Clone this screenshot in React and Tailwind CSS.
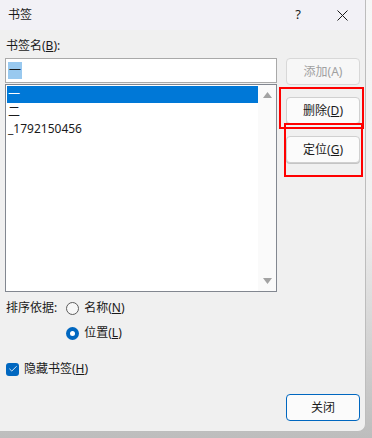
import { Check } from 'lucide-react';

const FONT = "font-['Noto_Sans','Noto_Sans_CJK_SC',sans-serif]";

function Btn({ children, disabled, primary, className = '' }) {
  return (
    <button
      className={`w-[74px] h-[27px] rounded-[4px] border text-[12px] leading-none flex items-center justify-center ${
        primary
          ? 'border-[#0067c0] bg-[#fbfbfb] text-[#1a1a1a]'
          : disabled
          ? 'border-[#d8d8d8] bg-[#f7f7f7] text-[#a0a0a0]'
          : 'border-[#d0d0d0] bg-[#fbfbfb] text-[#1a1a1a] shadow-[0_1px_0_#c4c4c4]'
      } ${className}`}
    >
      {children}
    </button>
  );
}

function Radio({ checked }) {
  return checked ? (
    <span className="w-[13px] h-[13px] rounded-full bg-[#0067c0] flex items-center justify-center">
      <span className="w-[5px] h-[5px] rounded-full bg-white" />
    </span>
  ) : (
    <span className="w-[13px] h-[13px] rounded-full border border-[#5c5c5c] bg-[#f7f7f7]" />
  );
}

export default function App() {
  const rows = ['一', '二', '_1792150456'];
  return (
    <div className={`${FONT} w-[372px] h-[438px] bg-[#b9b9b9] relative overflow-hidden`}>
      <div className="absolute inset-0 bg-gradient-to-b from-[#f6f6f6] via-[#f0f0f0] to-[#bdbdbd]" />
      <div className="relative w-[366px] h-[432px] bg-[#f0f0f0] border-r border-b border-[#bdbdbd] rounded-br-[8px] flex flex-col text-[#1a1a1a] text-[12px]">
        {/* Title bar */}
        <div className="h-[30px] bg-[#f2f1f6] flex items-center pl-[8px] shrink-0">
          <span className="text-[12px]">书签</span>
          <span className="ml-auto w-[16px] text-center text-[13px] mr-[31px]">?</span>
          <svg width="11" height="11" viewBox="0 0 11 11" className="mr-[17px]">
            <path d="M0.5 0.5 L10.5 10.5 M10.5 0.5 L0.5 10.5" stroke="#1a1a1a" strokeWidth="1" />
          </svg>
        </div>

        {/* Body */}
        <div className="flex flex-1 pl-[5px]">
          <div className="w-[272px] flex flex-col">
            <div className="mt-[8px] h-[16px] leading-[16px] pl-[1px]">
              书签名(<u>B</u>):
            </div>
            <div className="mt-[4px] h-[25px] border border-[#a9a9a9] bg-white flex items-center px-[2px]">
              <span className="bg-[#99c9ef] px-[1px] leading-[17px]">一</span>
            </div>
            <div className="mt-[1px] h-[208px] border border-[#828790] bg-white flex">
              <div className="flex-1 pt-[1px] pl-[1px]">
                {rows.map((r, i) => (
                  <div
                    key={r}
                    className={`h-[17px] leading-[17px] pl-[1px] ${i === 0 ? 'bg-[#0078d7] text-white' : ''}`}
                  >
                    {r}
                  </div>
                ))}
              </div>
              <div className="w-[18px] bg-[#fafafa] flex flex-col items-center justify-between py-[7px]">
                <svg width="9" height="6" viewBox="0 0 9 6"><path d="M4.5 0 L9 6 L0 6 Z" fill="#a3a3a3" /></svg>
                <svg width="9" height="6" viewBox="0 0 9 6"><path d="M0 0 L9 0 L4.5 6 Z" fill="#a3a3a3" /></svg>
              </div>
            </div>

            <div className="mt-[8px] flex">
              <span className="leading-[16px] pl-[1px]">排序依据:</span>
              <div className="ml-[9px] flex flex-col gap-[9px]">
                <label className="flex items-center gap-[5px] h-[16px]">
                  <Radio />
                  <span>名称(<u>N</u>)</span>
                </label>
                <label className="flex items-center gap-[5px] h-[16px]">
                  <Radio checked />
                  <span>位置(<u>L</u>)</span>
                </label>
              </div>
            </div>

            <label className="mt-[20px] flex items-center gap-[5px] pl-[1px] h-[16px]">
              <span className="w-[13px] h-[13px] rounded-[3px] bg-[#0067c0] flex items-center justify-center">
                <Check size={10} strokeWidth={2} color="white" />
              </span>
              <span>隐藏书签(<u>H</u>)</span>
            </label>
          </div>

          <div className="ml-[9px] flex flex-col pt-[28px]">
            <Btn disabled>添加(A)</Btn>
            <Btn className="mt-[12px]">删除(<u>D</u>)</Btn>
            <Btn className="mt-[12px]">定位(<u>G</u>)</Btn>
            <Btn primary className="mt-auto mb-[10px]">关闭</Btn>
          </div>
        </div>

        {/* annotation marks */}
        <div className="absolute left-[279px] top-[87px] w-[85px] h-[42px] border-2 border-[#ff0000]" />
        <div className="absolute left-[284px] top-[123px] w-[79px] h-[54px] border-2 border-[#ff0000]" />
      </div>
    </div>
  );
}
